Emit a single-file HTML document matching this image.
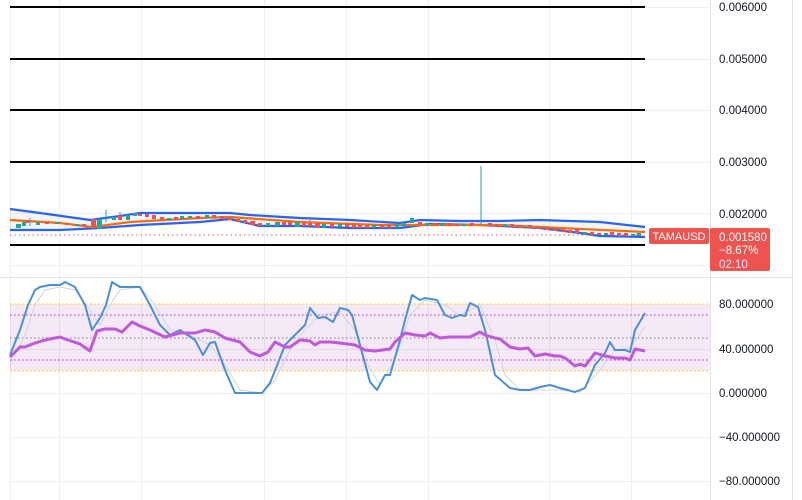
<!DOCTYPE html>
<html><head><meta charset="utf-8"><style>
html,body{margin:0;padding:0;background:#fff;}
body{width:802px;height:500px;overflow:hidden;position:relative;font-family:"Liberation Sans",sans-serif;}
svg{position:absolute;left:0;top:0;}
.lbl{position:absolute;left:719px;font-size:11.5px;color:#131722;line-height:12px;}
</style></head><body>
<svg width="802" height="500" viewBox="0 0 802 500">
<g stroke="#eceef2" stroke-width="1">
<line x1="10.5" y1="0" x2="10.5" y2="500"/>
<line x1="59.5" y1="0" x2="59.5" y2="500"/>
<line x1="141.5" y1="0" x2="141.5" y2="500"/>
<line x1="264.5" y1="0" x2="264.5" y2="500"/>
<line x1="346.5" y1="0" x2="346.5" y2="500"/>
<line x1="428.5" y1="0" x2="428.5" y2="500"/>
<line x1="549.5" y1="0" x2="549.5" y2="500"/>
<line x1="631.5" y1="0" x2="631.5" y2="500"/>
<line x1="10" y1="7.5" x2="710" y2="7.5"/>
<line x1="10" y1="59.5" x2="710" y2="59.5"/>
<line x1="10" y1="110.5" x2="710" y2="110.5"/>
<line x1="10" y1="162.5" x2="710" y2="162.5"/>
<line x1="10" y1="213.5" x2="710" y2="213.5"/>
<line x1="10" y1="265.5" x2="710" y2="265.5"/>
<line x1="10" y1="349.5" x2="710" y2="349.5"/>
<line x1="10" y1="393.5" x2="710" y2="393.5"/>
<line x1="10" y1="437.5" x2="710" y2="437.5"/>
<line x1="10" y1="481.5" x2="710" y2="481.5"/>
</g>
<line x1="0" y1="277.5" x2="792" y2="277.5" stroke="#e0e3eb"/>
<line x1="710.5" y1="0" x2="710.5" y2="500" stroke="#e0e3eb"/>
<line x1="792.5" y1="0" x2="792.5" y2="500" stroke="#e0e3eb"/>
<g stroke="#000" stroke-width="2">
<line x1="10" y1="7" x2="645" y2="7"/>
<line x1="10" y1="59" x2="645" y2="59"/>
<line x1="10" y1="110" x2="645" y2="110"/>
<line x1="10" y1="162" x2="645" y2="162"/>
<line x1="10" y1="245" x2="645" y2="245"/>
</g>
<line x1="10" y1="235" x2="645" y2="235" stroke="#f05350" stroke-width="1" stroke-dasharray="1.5,3"/>
<polygon fill="#2962ff" fill-opacity="0.06" points="10,209 40,213 90,220 120,216 140,213 230,213 250,215 300,218 350,220 400,223 420,220 460,221 500,221 540,220 570,221 600,222 645,227 645,237 600,236 580,233 540,228 480,225 430,224 400,228 350,228 300,226 260,226 230,219 200,222 140,225 100,228 60,230 10,230"/>
<g fill="none" stroke-width="2.2" stroke-linejoin="round">
<polyline stroke="#2962ff" points="10,209 40,213 90,220 120,216 140,213 230,213 250,215 300,218 350,220 400,223 420,220 460,221 500,221 540,220 570,221 600,222 645,227"/>
<polyline stroke="#2962ff" points="10,230 60,230 100,228 140,225 200,222 230,219 260,226 300,226 350,228 400,228 430,224 480,225 540,228 580,233 600,236 645,237"/>
<polyline stroke="#ff6d00" points="10,220 60,223 92,227 130,222 200,218 230,217 300,222 380,225 430,225 500,225 560,228 645,232"/>
</g>
<g stroke-width="1">
<line x1="481" y1="166" x2="481" y2="224" stroke="#26a69a"/>
<line x1="106" y1="210" x2="106" y2="222" stroke="#26a69a"/>
<line x1="30" y1="218" x2="30" y2="226" stroke="#26a69a"/>
<line x1="120" y1="212" x2="120" y2="220" stroke="#ef5350"/>
<line x1="310" y1="220" x2="310" y2="228" stroke="#ef5350"/>
</g>
<g>
<rect x="16" y="224" width="5" height="4" fill="#26a69a"/>
<rect x="22" y="222" width="4" height="4" fill="#26a69a"/>
<rect x="25" y="220" width="4" height="3" fill="#ef5350"/>
<rect x="36" y="222" width="4" height="3" fill="#26a69a"/>
<rect x="45" y="222" width="4" height="2" fill="#ef5350"/>
<rect x="55" y="222" width="4" height="2" fill="#26a69a"/>
<rect x="65" y="223" width="4" height="2" fill="#ef5350"/>
<rect x="75" y="224" width="4" height="2" fill="#26a69a"/>
<rect x="82" y="224" width="4" height="2" fill="#ef5350"/>
<rect x="91" y="219" width="5" height="8" fill="#ef5350"/>
<rect x="97" y="219" width="5" height="10" fill="#26a69a"/>
<rect x="112" y="217" width="4" height="3" fill="#26a69a"/>
<rect x="118" y="216" width="4" height="4" fill="#ef5350"/>
<rect x="126" y="215" width="4" height="5" fill="#26a69a"/>
<rect x="133" y="213" width="4" height="3" fill="#26a69a"/>
<rect x="138" y="214" width="4" height="2" fill="#ef5350"/>
<rect x="145" y="214" width="4" height="3" fill="#ef5350"/>
<rect x="152" y="215" width="4" height="4" fill="#ef5350"/>
<rect x="160" y="217" width="4" height="3" fill="#ef5350"/>
<rect x="167" y="218" width="4" height="2" fill="#26a69a"/>
<rect x="174" y="217" width="4" height="3" fill="#ef5350"/>
<rect x="180" y="216" width="4" height="3" fill="#26a69a"/>
<rect x="188" y="216" width="4" height="2" fill="#26a69a"/>
<rect x="196" y="216" width="4" height="3" fill="#ef5350"/>
<rect x="205" y="215" width="4" height="3" fill="#26a69a"/>
<rect x="212" y="215" width="4" height="2" fill="#ef5350"/>
<rect x="220" y="216" width="4" height="3" fill="#ef5350"/>
<rect x="228" y="217" width="4" height="3" fill="#ef5350"/>
<rect x="236" y="219" width="4" height="3" fill="#ef5350"/>
<rect x="243" y="220" width="4" height="3" fill="#ef5350"/>
<rect x="250" y="221" width="5" height="4" fill="#ef5350"/>
<rect x="258" y="223" width="4" height="3" fill="#ef5350"/>
<rect x="266" y="223" width="4" height="3" fill="#26a69a"/>
<rect x="275" y="222" width="5" height="4" fill="#26a69a"/>
<rect x="282" y="222" width="4" height="3" fill="#ef5350"/>
<rect x="288" y="222" width="4" height="3" fill="#ef5350"/>
<rect x="295" y="222" width="5" height="5" fill="#26a69a"/>
<rect x="302" y="223" width="4" height="3" fill="#ef5350"/>
<rect x="308" y="223" width="4" height="3" fill="#ef5350"/>
<rect x="315" y="223" width="5" height="5" fill="#ef5350"/>
<rect x="322" y="224" width="4" height="4" fill="#26a69a"/>
<rect x="330" y="224" width="4" height="3" fill="#ef5350"/>
<rect x="338" y="224" width="4" height="3" fill="#26a69a"/>
<rect x="345" y="224" width="4" height="3" fill="#ef5350"/>
<rect x="352" y="225" width="4" height="3" fill="#ef5350"/>
<rect x="358" y="225" width="4" height="3" fill="#ef5350"/>
<rect x="365" y="225" width="4" height="3" fill="#ef5350"/>
<rect x="372" y="225" width="4" height="3" fill="#26a69a"/>
<rect x="380" y="225" width="4" height="3" fill="#ef5350"/>
<rect x="387" y="225" width="4" height="3" fill="#ef5350"/>
<rect x="395" y="224" width="4" height="4" fill="#26a69a"/>
<rect x="402" y="223" width="4" height="3" fill="#26a69a"/>
<rect x="410" y="218" width="4" height="5" fill="#26a69a"/>
<rect x="418" y="222" width="4" height="3" fill="#ef5350"/>
<rect x="425" y="223" width="4" height="3" fill="#26a69a"/>
<rect x="433" y="223" width="4" height="3" fill="#ef5350"/>
<rect x="440" y="223" width="4" height="3" fill="#26a69a"/>
<rect x="448" y="223" width="4" height="3" fill="#ef5350"/>
<rect x="455" y="224" width="4" height="2" fill="#ef5350"/>
<rect x="462" y="224" width="4" height="2" fill="#26a69a"/>
<rect x="470" y="223" width="4" height="3" fill="#ef5350"/>
<rect x="488" y="223" width="4" height="3" fill="#ef5350"/>
<rect x="495" y="224" width="4" height="3" fill="#ef5350"/>
<rect x="503" y="224" width="4" height="2" fill="#26a69a"/>
<rect x="510" y="224" width="4" height="3" fill="#ef5350"/>
<rect x="518" y="225" width="4" height="3" fill="#ef5350"/>
<rect x="528" y="225" width="4" height="3" fill="#ef5350"/>
<rect x="536" y="226" width="4" height="3" fill="#ef5350"/>
<rect x="545" y="227" width="4" height="3" fill="#ef5350"/>
<rect x="553" y="228" width="4" height="3" fill="#ef5350"/>
<rect x="561" y="229" width="4" height="3" fill="#ef5350"/>
<rect x="568" y="230" width="4" height="3" fill="#ef5350"/>
<rect x="575" y="229" width="4" height="4" fill="#ef5350"/>
<rect x="583" y="232" width="4" height="3" fill="#26a69a"/>
<rect x="590" y="232" width="4" height="3" fill="#ef5350"/>
<rect x="597" y="233" width="4" height="2" fill="#ef5350"/>
<rect x="604" y="233" width="4" height="2" fill="#26a69a"/>
<rect x="610" y="232" width="4" height="3" fill="#ef5350"/>
<rect x="617" y="233" width="4" height="2" fill="#ef5350"/>
<rect x="624" y="233" width="4" height="3" fill="#ef5350"/>
<rect x="631" y="234" width="4" height="2" fill="#26a69a"/>
<rect x="637" y="233" width="4" height="3" fill="#26a69a"/>
</g>
<rect x="10" y="304" width="700" height="67" fill="#9c27b0" fill-opacity="0.1"/>
<g stroke-width="1" fill="none">
<line x1="10" y1="304" x2="710" y2="304" stroke="#f2c500" stroke-dasharray="1.5,2.5"/>
<line x1="10" y1="371" x2="710" y2="371" stroke="#f2c500" stroke-dasharray="1.5,2.5"/>
<line x1="10" y1="315" x2="710" y2="315" stroke="#9c27b0" stroke-dasharray="1.5,2.5"/>
<line x1="10" y1="360" x2="710" y2="360" stroke="#9c27b0" stroke-dasharray="1.5,2.5"/>
<line x1="10" y1="338" x2="710" y2="338" stroke="#787b86" stroke-dasharray="1.5,2.5"/>
</g>
<polyline fill="none" stroke="#d1d4dc" stroke-width="1" points="10,365 25,335 35,305 45,290 60,287 75,290 90,310 100,325 110,305 120,290 140,287 155,305 170,330 190,335 210,345 225,365 240,390 262,393 275,380 290,350 305,330 320,315 340,312 355,330 365,360 380,385 395,360 410,315 425,300 445,305 460,315 480,305 495,340 505,375 520,390 560,390 580,392 600,370 615,350 630,348 645,327"/>
<polyline fill="none" stroke="#4a90d9" stroke-width="2" stroke-linejoin="round" points="10,355 20,330 28,305 35,290 40,287 50,285 60,285 65,282 75,287 85,305 92,330 100,318 106,305 112,282 120,287 135,287 140,287 150,305 160,325 170,335 180,330 195,340 203,355 210,343 215,342 225,370 235,393 262,393 270,383 278,363 285,345 295,335 305,325 310,308 318,318 325,317 333,322 340,308 348,310 352,315 360,345 370,382 377,390 385,375 390,375 400,340 405,320 412,295 420,300 425,298 437,300 445,315 452,318 460,315 465,316 470,303 478,307 485,330 490,352 495,375 510,388 520,390 530,390 540,387 550,385 560,388 575,392 585,388 595,365 605,353 610,342 615,350 625,350 630,352 635,330 645,313"/>
<polyline fill="none" stroke="#c158dc" stroke-width="3" stroke-linejoin="round" points="10,357 20,347 25,347 35,343 45,340 60,337 65,339 80,344 90,351 97,331 105,329 115,329 122,332 132,322 140,326 150,330 165,337 180,333 195,333 205,330 215,332 225,338 240,342 250,352 260,356 268,352 275,342 285,347 290,347 300,340 310,341 315,345 320,342 330,342 340,343 355,345 365,350 375,351 390,349 395,342 405,333 415,335 425,336 430,333 440,338 450,337 460,337 470,337 480,332 485,335 495,338 500,339 510,347 520,349 528,348 535,356 545,354 555,356 560,356 565,358 575,366 580,364 585,366 595,353 605,356 615,358 625,358 630,360 635,349 645,351"/>
<rect x="649" y="228" width="60" height="16" rx="2" fill="#ef5350"/>
<text x="679" y="240" fill="#fff" font-family="Liberation Sans,sans-serif" font-size="11" text-anchor="middle">TAMAUSD</text>
<rect x="710" y="228" width="60" height="43" rx="2" fill="#ef5350"/>
<text x="719" y="241" fill="#fff" font-family="Liberation Sans,sans-serif" font-size="11.5">0.001580</text>
<text x="719" y="254" fill="#fff" font-family="Liberation Sans,sans-serif" font-size="11.5">−8.67%</text>
<text x="719" y="268" fill="#fde" font-family="Liberation Sans,sans-serif" font-size="11.5">02:10</text>
</svg>
<div class="lbl" style="top:2px">0.006000</div>
<div class="lbl" style="top:54px">0.005000</div>
<div class="lbl" style="top:105px">0.004000</div>
<div class="lbl" style="top:157px">0.003000</div>
<div class="lbl" style="top:209px">0.002000</div>
<div class="lbl" style="top:299px">80.000000</div>
<div class="lbl" style="top:344px">40.000000</div>
<div class="lbl" style="top:388px">0.000000</div>
<div class="lbl" style="top:432px">−40.000000</div>
<div class="lbl" style="top:476px">−80.000000</div>
</body></html>
